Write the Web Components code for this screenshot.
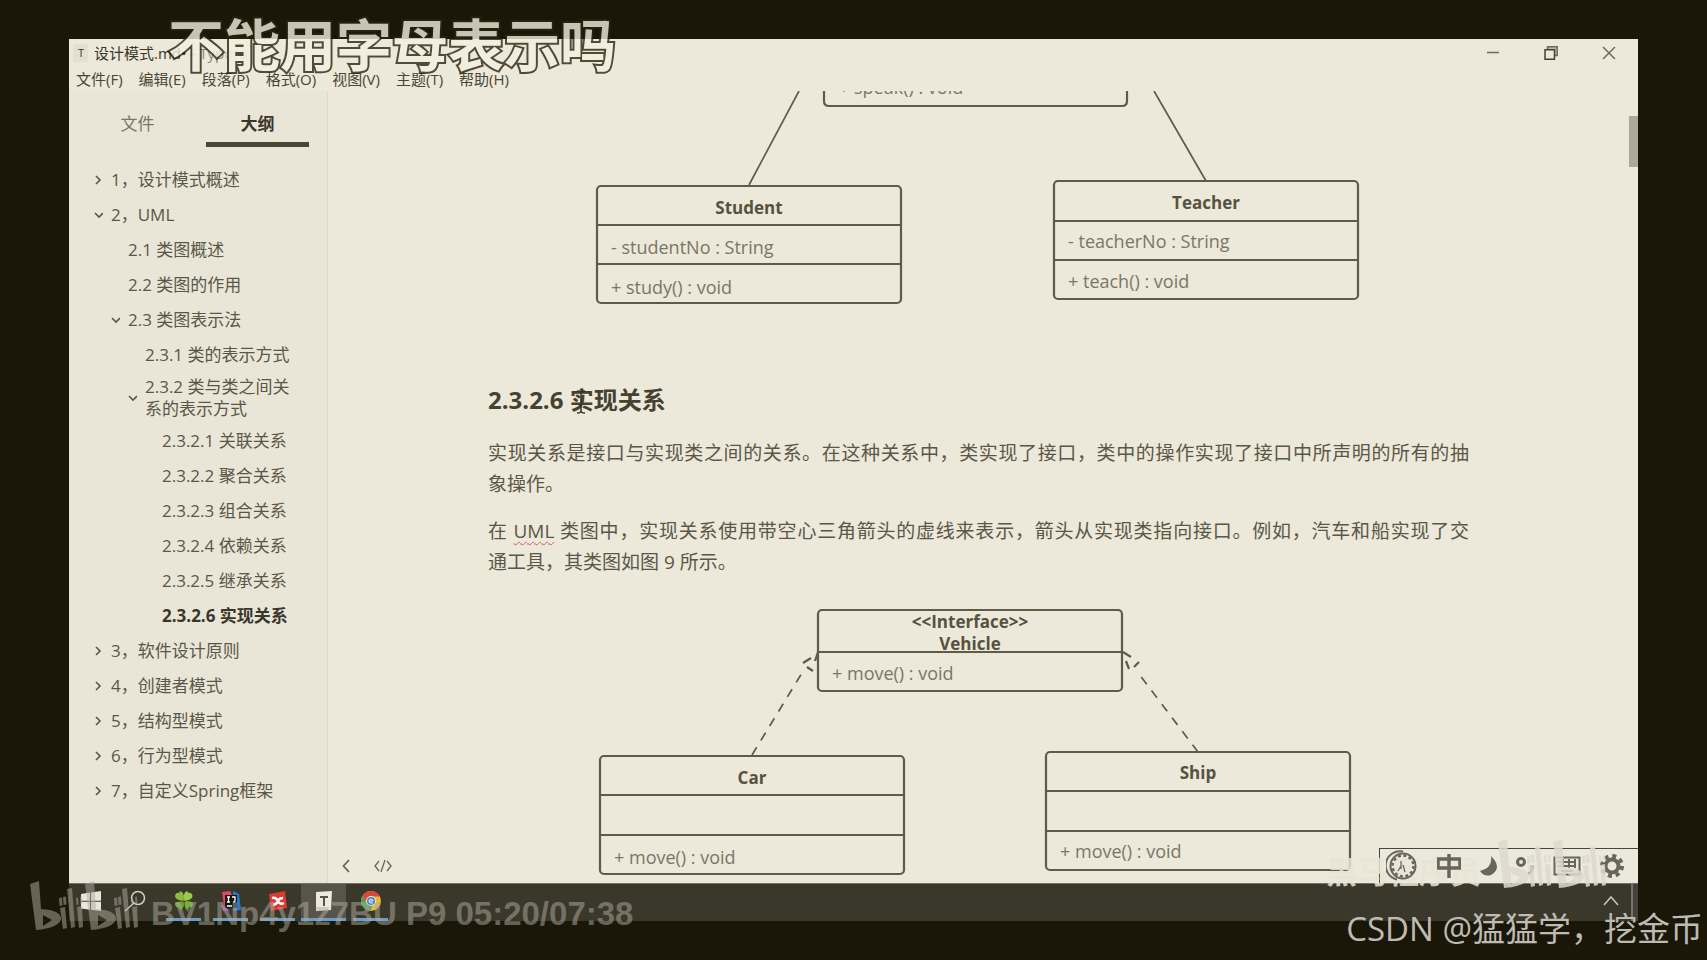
<!DOCTYPE html>
<html lang="zh-CN">
<head>
<meta charset="utf-8">
<title>设计模式.md - Typora</title>
<style>
:root{
  --ink:#5b5747; --ink-strong:#464231; --paper:#ece8da; --side:#e9e6d8;
  --night:#1b1708; --bar:#3a372b;
}
body{margin:0;background:var(--night);color:var(--ink);
  font-family:"Open Sans","Noto Sans CJK SC",sans-serif;font-size:17px}
</style>
</head>
<body>
<desktop-screen>
  <title-bar slot="window"></title-bar>
  <menu-bar slot="window"></menu-bar>
  <editor-body slot="window">
    <outline-panel slot="side">
      <outline-item level="1" state="closed">1，设计模式概述</outline-item>
      <outline-item level="1" state="open">2，UML</outline-item>
      <outline-item level="2">2.1 类图概述</outline-item>
      <outline-item level="2">2.2 类图的作用</outline-item>
      <outline-item level="2" state="open">2.3 类图表示法</outline-item>
      <outline-item level="3">2.3.1 类的表示方式</outline-item>
      <outline-item level="3" state="open">2.3.2 类与类之间关系的表示方式</outline-item>
      <outline-item level="4">2.3.2.1 关联关系</outline-item>
      <outline-item level="4">2.3.2.2 聚合关系</outline-item>
      <outline-item level="4">2.3.2.3 组合关系</outline-item>
      <outline-item level="4">2.3.2.4 依赖关系</outline-item>
      <outline-item level="4">2.3.2.5 继承关系</outline-item>
      <outline-item level="4" active>2.3.2.6 实现关系</outline-item>
      <outline-item level="1" state="closed">3，软件设计原则</outline-item>
      <outline-item level="1" state="closed">4，创建者模式</outline-item>
      <outline-item level="1" state="closed">5，结构型模式</outline-item>
      <outline-item level="1" state="closed">6，行为型模式</outline-item>
      <outline-item level="1" state="closed">7，自定义Spring框架</outline-item>
    </outline-panel>
    <doc-view></doc-view>
  </editor-body>
  <task-bar slot="taskbar"></task-bar>
  <danmaku-line slot="overlay">不能用字母表示吗</danmaku-line>
  <video-mark slot="overlay">BV1Np4y1z7BU P9 05:20/07:38</video-mark>
  <ime-tray slot="overlay"></ime-tray>
  <author-mark slot="overlay">CSDN @猛猛学，挖金币</author-mark>
</desktop-screen>

<script>
function define(name, html, setup){
  const t=document.createElement('template');
  t.innerHTML=html;
  customElements.define(name, class extends HTMLElement{
    constructor(){
      super();
      this.attachShadow({mode:'open'}).append(t.content.cloneNode(true));
    }
    connectedCallback(){ if(setup) setup(this,this.shadowRoot); }
  });
}

define('desktop-screen',`
<style>
:host{display:flex;flex-direction:column;box-sizing:border-box;position:relative;
  height:100vh;padding:39px 69px;overflow:hidden}
.win{flex:1;min-height:0;display:flex;flex-direction:column;background:var(--paper)}
</style>
<div class="win"><slot name="window"></slot></div>
<slot name="taskbar"></slot>
<slot name="overlay"></slot>`);

define('title-bar',`
<style>
:host{display:flex;align-items:center;height:27px;padding:0 16px 0 4px;font-size:15px;color:#39362b}
.doc{width:14px;height:18px;margin:0 6px 0 0;padding-left:1px;background:#e3e0d2;
  font-size:11px;line-height:18px;text-align:center}
.name{flex:1;white-space:pre}
.dim{color:#8d8979}.dimmer{color:#c9c5b6}
.ctl{display:flex;gap:32px}
button{border:0;background:none;padding:0;width:26px;height:24px;display:grid;place-items:center}
svg{width:14px;height:14px;fill:none;stroke:#6f6b5b;stroke-width:1.5}
</style>
<span class="doc">T</span>
<span class="name">设计模式.md• <span class="dim">- Typ</span><span class="dimmer">ora</span></span>
<div class="ctl">
<button aria-label="最小化"><svg viewBox="0 0 14 14"><path d="M1 6.5h12"/></svg></button>
<button aria-label="还原"><svg viewBox="0 0 14 14"><path d="M3.500 3.500V.8h9.700v8.700h-2.500" fill="#bdb9aa"/><path d="M1 3.700h9.500v9.500H1z" stroke="#45412f" fill="#ece8da"/></svg></button>
<button aria-label="关闭"><svg viewBox="0 0 14 14"><path d="M1 1l12 12M13 1L1 13"/></svg></button>
</div>`);

define('menu-bar',`
<style>
:host{display:flex;gap:16px;height:25px;padding-left:7px;align-items:center}
button{border:0;background:none;padding:0;font:inherit;font-size:15px;line-height:22px;color:#4a4636}
</style>
<button>文件(F)</button><button>编辑(E)</button><button>段落(P)</button><button>格式(O)</button>
<button>视图(V)</button><button>主题(T)</button><button>帮助(H)</button>`);

define('editor-body',`
<style>
:host{flex:1;min-height:0;display:flex}
</style>
<slot name="side"></slot><slot></slot>`);

define('outline-panel',`
<style>
:host{display:block;box-sizing:border-box;width:259px;background:var(--side);border-right:1px solid #dfdbcd}
.tabs{display:grid;grid-template-columns:1fr 1fr;gap:17px;padding:14px 18px 0 17px}
button{border:0;border-bottom:5px solid transparent;background:none;padding:0;height:42px;
  font:inherit;line-height:37px;color:#7a7667}
.on{font-weight:700;color:#39362b;border-color:#4a4737}
nav{padding:15px 24px 0 0}
</style>
<div class="tabs" role="tablist"><button role="tab">文件</button><button role="tab" class="on" aria-selected="true">大纲</button></div>
<nav aria-label="大纲"><slot></slot></nav>`);

define('outline-item',`
<style>
:host{display:flex;align-items:center;min-height:35px;line-height:22px}
:host([level="1"]){padding-left:24px}
:host([level="2"]){padding-left:41px}
:host([level="3"]){padding-left:58px}
:host([level="4"]){padding-left:75px}
:host([level="3"][state]){padding-top:4px;padding-bottom:3px}
:host([active]){font-weight:700;color:#39362b}
svg{width:10px;height:10px;margin-right:8px;flex:none;fill:none;stroke:#5b5747;stroke-width:1.600}
path{display:none}
:host([state="closed"]) .c,:host([state="open"]) .o{display:block}
a{color:inherit;text-decoration:none}
</style>
<svg viewBox="0 0 10 10"><path class="c" d="M3 1l4 4-4 4"/><path class="o" d="M2 3l4 4 4-4"/></svg>
<a href="#doc"><slot></slot></a>`);

define('doc-view',`
<style>
:host{flex:1;min-width:0;display:block;position:relative;overflow:hidden}
article{padding:0 169px 0 160px}
h5{position:relative;margin:71px 0 20px;font-size:24px;line-height:36px;color:var(--ink-strong)}
h5 svg{position:absolute;left:88px;top:8px;width:10px;height:24px;fill:none;stroke:#35321f;stroke-width:1.500}
p{margin:0 0 16px;font-size:19px;line-height:31px}
.full{display:block;text-align:justify;text-align-last:justify}
.sp{text-decoration:underline wavy #d0604c 1px;text-underline-offset:3px}
uml-diagram{margin-top:30px}
uml-diagram:first-child{margin-top:0}
.thumb{position:absolute;right:0;top:25px;width:9px;height:51px;background:#ada899}
.foot{position:absolute;left:10px;bottom:5px;display:flex;gap:19px}
button{border:0;background:none;padding:0;height:24px;min-width:16px}
.foot svg{display:block;height:16px;fill:none;stroke:#6a6656;stroke-width:1.800}
</style>
<article id="doc">
<uml-diagram kind="inherit"></uml-diagram>
<h5>2.3.2.6 实现关系<svg viewBox="0 0 10 24"><path d="M1 1q4 0 4 2v18q0 2-4 2M9 1q-4 0-4 2M5 21q0 2 4 2"/></svg></h5>
<p><span class="full">实现关系是接口与实现类之间的关系。在这种关系中，类实现了接口，类中的操作实现了接口中所声明的所有的抽</span>象操作。</p>
<p><span class="full">在 <span class="sp">UML</span> 类图中，实现关系使用带空心三角箭头的虚线来表示，箭头从实现类指向接口。例如，汽车和船实现了交</span>通工具，其类图如图 9 所示。</p>
<uml-diagram kind="realize"></uml-diagram>
</article>
<div class="thumb"></div>
<div class="foot">
<button aria-label="收起侧栏"><svg width="16" viewBox="0 0 16 16"><path d="M11 2L5.500 8l5.500 6"/></svg></button>
<button aria-label="源代码模式"><svg width="20" viewBox="0 0 20 16"><path d="M6 3L2 8l4 5M14 3l4 5-4 5M12 2L8 14" stroke-width="1.300"/></svg></button>
</div>`);

/* Each class box: left, top, the y of every divider, bottom, and its texts. */
const diagrams={
  inherit:{view:'488 91 981 220',label:'Student 与 Teacher 继承关系',
    extra:'<path d="M824 85v16q0 5 5 5h293q5 0 5-5V85"/><path d="M799 91l-50 94M1154 91l52 90" class="thin"/>',
    free:[['+ speak() : void',839,94]],
    boxes:[
      {x:597,y:186,b:303,div:[225,264],name:[['Student',214]],rows:[['- studentNo : String',254],['+ study() : void',294]]},
      {x:1054,y:181,b:299,div:[221,260],name:[['Teacher',209]],rows:[['- teacherNo : String',248],['+ teach() : void',288]]}]},
  realize:{view:'488 608 981 270',label:'Car 与 Ship 实现 Vehicle 接口',
    extra:`<path class="thin" stroke-dasharray="9 8" d="M752 755L805 668M1198 752L1139 674"/>
      <path d="M803 663l8-5M807 667l6 4M815 661l3-9M1123 652l8 5M1126 661l3 8M1134 667l5-5"/>`,
    free:[],
    boxes:[
      {x:818,y:610,b:691,div:[652],name:[['<<Interface>>',628],['Vehicle',650]],rows:[['+ move() : void',680]]},
      {x:600,y:756,b:874,div:[795,835],name:[['Car',784]],rows:[['+ move() : void',864]]},
      {x:1046,y:752,b:870,div:[791,831],name:[['Ship',779]],rows:[['+ move() : void',858]]}]}
};
const esc=s=>s.replace(/</g,'&lt;').replace(/>/g,'&gt;');
define('uml-diagram',`
<style>
:host{display:block}
svg{display:block;width:100%;height:auto}
path,rect{fill:none;stroke:#5f5b49;stroke-width:2.200}
.thin{stroke-width:1.700}
text{font-size:18px;fill:#7b7664}
.n{font-size:17px;font-weight:700;text-anchor:middle;fill:#57523f}
</style><div></div>`,(host,root)=>{
  const d=diagrams[host.getAttribute('kind')];
  let s=d.extra;
  for(const [t,x,y] of d.free) s+=`<text x="${x}" y="${y}">${esc(t)}</text>`;
  for(const b of d.boxes){
    s+=`<rect x="${b.x}" y="${b.y}" width="304" height="${b.b-b.y}" rx="4"/>`;
    for(const y of b.div) s+=`<path d="M${b.x} ${y}h304"/>`;
    for(const [t,y] of b.name) s+=`<text class="n" x="${b.x+152}" y="${y}">${esc(t)}</text>`;
    for(const [t,y] of b.rows) s+=`<text x="${b.x+14}" y="${y}">${esc(t)}</text>`;
  }
  root.querySelector('div').innerHTML=`<svg viewBox="${d.view}" role="img" aria-label="${d.label}">${s}</svg>`;
});

define('task-bar',`
<style>
:host{display:flex;height:38px;background:var(--bar);box-sizing:border-box;border-top:1px solid #757161}
button{border:0;border-bottom:3px solid transparent;background:none;padding:0;height:37px;display:grid;place-items:center}
.apps{display:flex;flex:1;padding-left:4px}
.apps button{width:35px}
.apps .run{border-color:#6a9fca;margin-left:12px}
.apps .s{margin:0 0 0 9px}
.apps .s+.run{margin-left:14px}
.apps .cur{width:45px;background:#57544a;margin-left:6px}
.apps .cur+.run{margin-left:7px}
svg{width:22px;height:22px}
.end{width:5px;border-left:2px solid #77746a;background:#45423a}
.up{margin-right:12px;width:16px}
.up svg{width:16px;fill:none;stroke:#c9c6b8;stroke-width:1.500}
</style>
<div class="apps">
<button aria-label="开始"><svg viewBox="0 0 22 22" fill="#e9e6da"><path d="M1 4l9-1.500v8.200H1zM11 2.400L21 1v9.700H11zM1 11.700h9v8L1 18.500zM11 11.700h10V21l-10-1.200z"/></svg></button>
<button class="s" aria-label="搜索"><svg viewBox="0 0 22 22" fill="none" stroke="#d2cfc2" stroke-width="1.500"><circle cx="14" cy="8" r="6.500"/><path d="M10 13L1 21"/></svg></button>
<button class="run" aria-label="四叶草"><svg viewBox="0 0 22 22"><path d="M12 12q0 5 3 9" stroke="#57862b" stroke-width="2" fill="none"/><path fill="#8cbc3e" d="M10.500 11Q2 10 2 6q1-4 4-3 1-3 3-1 3 3 1.500 9z"/><path fill="#9cc94e" d="M11.500 11q8-1 8-5-1-4-4-3-1-3-3-1-3 3-1 9z"/><path fill="#6ea22f" d="M10.500 11.500Q1 11 2 15q1 3 4 2 0 4 3 2 3-3 1.500-7.500z"/><path fill="#7cb038" d="M12 11.500q8-1 8 3-1 4-4 2 0 4-3 2-2-3-1-7z"/></svg></button>
<button class="run" aria-label="IntelliJ IDEA"><svg viewBox="0 0 22 22"><path fill="#e2486a" d="M2 2l8-1 3 6-9 8z"/><path fill="#2478cf" d="M13 1l6 3 2 16-8 1z"/><path fill="#9d4cb8" d="M1 14l9 7H3z"/><path fill="#17150f" d="M5 5h12v13H5z"/><path d="M7 7h3M8.500 7v5M7 12h3M12 7h3v4q0 1-2 1M7 16h5" stroke="#fff" stroke-width="1.300" fill="none"/></svg></button>
<button class="run" aria-label="XMind"><svg viewBox="0 0 22 22"><path fill="#df3a31" d="M2 4l16-3 2 17-16 3z"/><path d="M5 8q4-1 6 3t6 2M6 15q4-1 5-4t5-3" stroke="#fff" stroke-width="2.400" fill="none"/></svg></button>
<button class="run cur" aria-label="Typora"><svg viewBox="0 0 22 22"><path fill="#eceadf" d="M3 2l16-1-1 19-15 1z"/><path d="M7 7h8M11 7v9" stroke="#55524a" stroke-width="2"/></svg></button>
<button class="run" aria-label="Chrome"><svg viewBox="0 0 22 22"><circle cx="11" cy="11" r="10" fill="#e8b93a"/><path fill="#d9483b" d="M2.300 6a10 10 0 0 1 17.500.500H11L7 13z"/><path fill="#4e9f55" d="M2.300 6l5 8 5 1-2 6A10 10 0 0 1 2.300 6z"/><circle cx="11" cy="11" r="5" fill="#eceadf"/><circle cx="11" cy="11" r="4" fill="#3f86c9"/><path d="M9 11h4q0-2-2-2t-2 2 2 2h2" stroke="#eee" fill="none"/></svg></button>
</div>
<button class="up" aria-label="显示隐藏的图标"><svg viewBox="0 0 16 22"><path d="M1 15l7-8 7 8"/></svg></button>
<div class="end"></div>`);

define('danmaku-line',`
<style>
:host{position:absolute;left:168px;top:2px;font:700 56px/80px "Noto Sans CJK SC",sans-serif;
  color:#f3efe1;opacity:.8;-webkit-text-stroke:4px #28240f;paint-order:stroke fill;white-space:nowrap}
</style><slot></slot>`);

define('bili-logo',`
<style>:host{display:block}svg{display:block;width:110px;height:50px;fill:currentColor}</style>
<svg viewBox="0 0 110 50" aria-hidden="true">
<g id="half"><path fill-rule="evenodd" d="M0 3L9 0L11 28Q31 29 31 38Q29 47 6 49zM13 34v11l9-6z"/>
<path d="M29 17l3-.5.500 8-3 .5zM33 16l3-.5.500 8-3 .5zM30 27l5-1 2 21-4 1zM37 8l5-1 3 39-4 1zM46 17l2-.5.500 7-2 .5zM50 16l2-.5.500 7-2 .5zM47 26l5-1 1 21-4 1z"/></g>
<use href="#half" x="55"/></svg>`);

define('video-mark',`
<style>
:host{position:absolute;left:30px;top:881px;display:flex;gap:11px;color:#b0ac9f;opacity:.5;
  font:700 33px/38px "Liberation Sans",sans-serif;white-space:nowrap}
span{padding-top:14px}
</style><bili-logo></bili-logo><span><slot></slot></span>`);

define('ime-tray',`
<style>
:host{position:absolute;right:69px;top:848px;width:259px;height:35px;box-sizing:border-box;
  border:solid #4a4636;border-width:1px 0 0 1px;background:#ebe8dc}
.row{position:relative;display:flex;align-items:center;height:34px;padding:0 14px 0 6px;justify-content:space-between}
button{border:0;background:none;padding:0;display:grid;place-items:center}
svg{fill:none;stroke:#69655a;stroke-width:3}
.ghost{position:absolute;color:#dedbcd;left:118px;top:-10px;opacity:.85}
.school{position:absolute;left:-54px;top:3px;font:700 31px/36px "Noto Sans CJK SC",sans-serif;
  color:#e8e5d7;opacity:.85;white-space:nowrap}
</style>
<span class="school">黑马程序员</span>
<div class="row">
<button aria-label="输入法"><svg width="32" height="32" viewBox="0 0 32 32"><path d="M17 1.500a14 14 0 0 0-6 28" stroke-width="2"/><circle cx="17" cy="16" r="12.500" stroke-width="2"/><circle cx="17" cy="16" r="10.500" stroke-dasharray="3 2.500" stroke-width="2.500"/><path d="M15 11v8M12 21l3-5M17 15l2 7" stroke-width="1.300"/></svg></button>
<button aria-label="中文"><svg width="24" height="24" viewBox="0 0 24 24"><path d="M1 5h22v9H1zM12 0v24" stroke-width="3.500"/></svg></button>
<button aria-label="夜间"><svg width="18" height="22" viewBox="0 0 18 22"><path d="M11 1q2 12-11 15 4 6 11 4 12-7 0-19z" fill="#69655a" stroke="none"/></svg></button>
<button aria-label="标点"><svg width="18" height="22" viewBox="0 0 18 22"><circle cx="5" cy="7" r="3.500"/><path d="M14 12h2q0 5-3 7"/></svg></button>
<button aria-label="软键盘"><svg width="28" height="20" viewBox="0 0 28 20"><path d="M1.500 1.500h25v17h-25zM5 6h18M5 10h18M8 15h12M10 3v9M16 3v9M22 3v9" stroke-width="2"/></svg></button>
<button aria-label="设置"><svg width="24" height="24" viewBox="0 0 24 24"><circle cx="12" cy="12" r="6.500" stroke-width="4"/><circle cx="12" cy="12" r="10" stroke-dasharray="4 3.850" stroke-width="4"/></svg></button>
</div>
<bili-logo class="ghost"></bili-logo>`);

define('author-mark',`
<style>
:host{position:absolute;right:4px;bottom:9px;font-size:33px;line-height:44px;color:#bebbb5;white-space:nowrap}
</style><slot></slot>`);
</script>
</body>
</html>
